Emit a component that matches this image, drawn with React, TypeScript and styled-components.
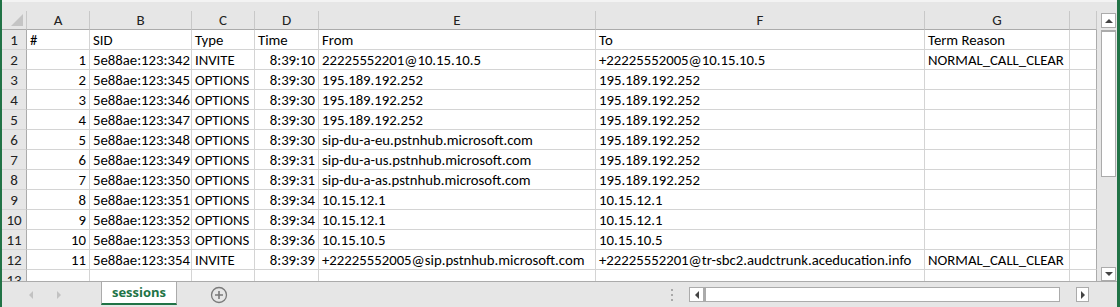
import React from 'react';
import styled, { createGlobalStyle } from 'styled-components';

const GlobalStyle = createGlobalStyle`
  html, body {
    margin: 0;
    padding: 0;
    background: #e6e6e6;
  }
  * {
    box-sizing: border-box;
  }
`;

const COLS = [25, 63, 102, 63, 64, 277, 329, 145, 27];
const LETTERS = ['', 'A', 'B', 'C', 'D', 'E', 'F', 'G', ''];
const RIGHT_ALIGNED = [0, 3];

type Row = (string | number)[];

const rows: Row[] = [
  ['#', 'SID', 'Type', 'Time', 'From', 'To', 'Term Reason'],
  [1, '5e88ae:123:342', 'INVITE', '8:39:10', '22225552201@10.15.10.5', '+22225552005@10.15.10.5', 'NORMAL_CALL_CLEAR'],
  [2, '5e88ae:123:345', 'OPTIONS', '8:39:30', '195.189.192.252', '195.189.192.252', ''],
  [3, '5e88ae:123:346', 'OPTIONS', '8:39:30', '195.189.192.252', '195.189.192.252', ''],
  [4, '5e88ae:123:347', 'OPTIONS', '8:39:30', '195.189.192.252', '195.189.192.252', ''],
  [5, '5e88ae:123:348', 'OPTIONS', '8:39:30', 'sip-du-a-eu.pstnhub.microsoft.com', '195.189.192.252', ''],
  [6, '5e88ae:123:349', 'OPTIONS', '8:39:31', 'sip-du-a-us.pstnhub.microsoft.com', '195.189.192.252', ''],
  [7, '5e88ae:123:350', 'OPTIONS', '8:39:31', 'sip-du-a-as.pstnhub.microsoft.com', '195.189.192.252', ''],
  [8, '5e88ae:123:351', 'OPTIONS', '8:39:34', '10.15.12.1', '10.15.12.1', ''],
  [9, '5e88ae:123:352', 'OPTIONS', '8:39:34', '10.15.12.1', '10.15.12.1', ''],
  [10, '5e88ae:123:353', 'OPTIONS', '8:39:36', '10.15.10.5', '10.15.10.5', ''],
  [11, '5e88ae:123:354', 'INVITE', '8:39:39', '+22225552005@sip.pstnhub.microsoft.com', '+22225552201@tr-sbc2.audctrunk.aceducation.info', 'NORMAL_CALL_CLEAR'],
  ['', '', '', '', '', '', ''],
];

const Frame = styled.div`
  width: 1120px;
  height: 307px;
  display: grid;
  grid-template-columns: 1fr 20px;
  grid-template-rows: 11px 270px 26px;
  border-left: 2px solid #217346;
  border-right: 3px solid #217346;
  background: #e6e6e6;
  overflow: hidden;
  font-family: Carlito, Lato, 'Liberation Sans', sans-serif;
`;

const TopStrip = styled.div`
  grid-column: 1 / 3;
  border-top: 2px solid #f3f3f3;
`;

const Sheet = styled.div`
  display: grid;
  grid-template-columns: ${COLS.map((c) => `${c}px`).join(' ')};
  grid-auto-rows: 20px;
  grid-template-rows: 19px;
  overflow: hidden;
  background: #fff;
`;

const HeadCell = styled.div`
  position: relative;
  background: #e6e6e6;
  border-right: 1px solid #c8c8c8;
  border-bottom: 1px solid #ababab;
  color: #222;
  font-size: 15px;
  line-height: 19px;
  text-align: center;
`;

const CornerMark = styled.div`
  position: absolute;
  right: 3px;
  bottom: 3px;
  width: 0;
  height: 0;
  border-left: 12px solid transparent;
  border-bottom: 12px solid #c4c4c4;
`;

const RowHead = styled.div`
  background: #e6e6e6;
  border-right: 1px solid #ababab;
  border-bottom: 1px solid #d4d4d4;
  color: #222;
  font-size: 15px;
  line-height: 20px;
  text-align: center;
`;

const Cell = styled.div<{ $right?: boolean }>`
  border-right: 1px solid #d4d4d4;
  border-bottom: 1px solid #d4d4d4;
  padding: 0 3px 0 3px;
  color: #000;
  font-size: 14.75px;
  line-height: 21px;
  white-space: nowrap;
  overflow: hidden;
  text-align: ${(p) => (p.$right ? 'right' : 'left')};
`;

const EdgeCell = styled.div`
  border-right: 1px solid #ababab;
  border-bottom: 1px solid #d4d4d4;
`;

const VScroll = styled.div`
  display: flex;
  flex-direction: column;
  padding: 2px 1px 0 4px;
  background: #e6e6e6;
`;

const ArrowBox = styled.div<{ $w?: number; $h?: number }>`
  width: ${(p) => p.$w ?? 15}px;
  height: ${(p) => p.$h ?? 15}px;
  flex: none;
  border: 1px solid #ababab;
  background: #fff;
  display: flex;
  align-items: center;
  justify-content: center;
`;

const VTrack = styled.div`
  flex: 1;
  padding: 2px 0 2px 0;
  display: flex;
  flex-direction: column;
`;

const VThumb = styled.div`
  height: 147px;
  border: 1px solid #ababab;
  border-top: 2px solid #ababab;
  background: #fff;
`;

const TabBar = styled.div`
  grid-column: 1 / 3;
  display: flex;
  align-items: stretch;
  border-top: 1px solid #ababab;
  background: #e6e6e6;
`;

const NavArea = styled.div`
  width: 99px;
  display: flex;
  align-items: center;
  gap: 22px;
  padding-left: 26px;
`;

const Tab = styled.div`
  width: 76px;
  margin-bottom: 2px;
  background: #fff;
  border-left: 1px solid #ababab;
  border-right: 1px solid #ababab;
  border-bottom: 2px solid #217346;
  color: #217346;
  font-family: 'Open Sans', 'Liberation Sans', sans-serif;
  font-weight: 700;
  font-size: 13px;
  display: flex;
  align-items: center;
  justify-content: center;
  padding-bottom: 1px;
`;

const AddSheet = styled.div`
  margin-left: 33px;
  display: flex;
  align-items: center;
`;

const Spacer = styled.div`
  flex: 1;
`;

const SplitDots = styled.div`
  width: 16px;
  display: flex;
  align-items: center;
  justify-content: center;
  margin-right: 9px;
`;

const HScroll = styled.div`
  width: 400px;
  margin-right: 28px;
  display: flex;
  align-items: center;
`;

const HThumb = styled.div`
  width: 356px;
  height: 15px;
  border: 1px solid #ababab;
  border-left: 2px solid #ababab;
  background: #fff;
`;

const HTrack = styled.div`
  flex: 1;
`;

const Tri = ({ dir, color = '#444' }: { dir: 'up' | 'down' | 'left' | 'right'; color?: string }) => {
  const pts = {
    up: '0,5 4,1 8,5',
    down: '0,1 4,5 8,1',
    left: '5,0 1,4 5,8',
    right: '1,0 5,4 1,8',
  }[dir];
  const vertical = dir === 'up' || dir === 'down';
  return (
    <svg width={vertical ? 8 : 6} height={vertical ? 6 : 8} viewBox={vertical ? '0 0 8 6' : '0 0 6 8'}>
      <polygon points={pts} fill={color} />
    </svg>
  );
};

export default function App() {
  return (
    <>
      <GlobalStyle />
      <Frame>
        <TopStrip />
        <Sheet>
          {LETTERS.map((l, i) => (
            <HeadCell key={`h${i}`}>
              {i === 0 && <CornerMark />}
              {l}
            </HeadCell>
          ))}
          {rows.map((r, ri) => (
            <React.Fragment key={ri}>
              <RowHead>{ri + 1}</RowHead>
              {r.map((v, ci) => (
                <Cell key={ci} $right={ri > 0 && RIGHT_ALIGNED.includes(ci)}>
                  {v}
                </Cell>
              ))}
              <EdgeCell />
            </React.Fragment>
          ))}
        </Sheet>
        <VScroll>
          <ArrowBox>
            <Tri dir="up" />
          </ArrowBox>
          <VTrack>
            <VThumb />
          </VTrack>
          <ArrowBox $h={14}>
            <Tri dir="down" />
          </ArrowBox>
        </VScroll>
        <TabBar>
          <NavArea>
            <Tri dir="left" color="#c2c2c2" />
            <Tri dir="right" color="#c2c2c2" />
          </NavArea>
          <Tab>sessions</Tab>
          <AddSheet>
            <svg width="18" height="18" viewBox="0 0 18 18">
              <circle cx="9" cy="9" r="7.5" fill="none" stroke="#7a7a7a" strokeWidth="1.3" />
              <path d="M9 5v8M5 9h8" stroke="#7a7a7a" strokeWidth="1.6" />
            </svg>
          </AddSheet>
          <Spacer />
          <SplitDots>
            <svg width="3" height="12" viewBox="0 0 3 12">
              <rect x="0" y="0" width="2" height="2" fill="#a8a8a8" />
              <rect x="0" y="5" width="2" height="2" fill="#a8a8a8" />
              <rect x="0" y="10" width="2" height="2" fill="#a8a8a8" />
            </svg>
          </SplitDots>
          <HScroll>
            <ArrowBox $w={15}>
              <Tri dir="left" />
            </ArrowBox>
            <HThumb />
            <HTrack />
            <ArrowBox $w={13}>
              <Tri dir="right" />
            </ArrowBox>
          </HScroll>
        </TabBar>
      </Frame>
    </>
  );
}
